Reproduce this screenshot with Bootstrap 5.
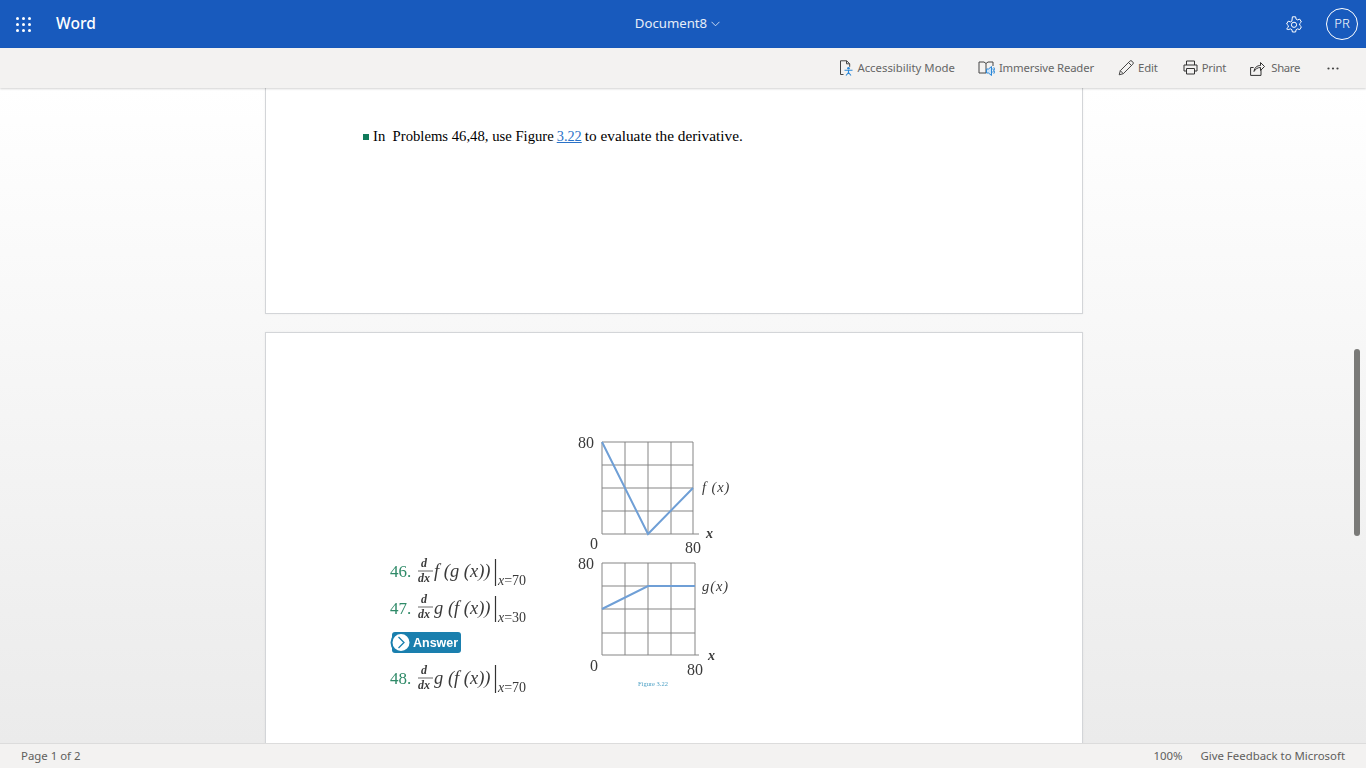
<!DOCTYPE html>
<html lang="en">
<head>
<meta charset="utf-8">
<title>Document8 - Word</title>
<link href="https://cdn.jsdelivr.net/npm/bootstrap@5.3.0/dist/css/bootstrap.min.css" rel="stylesheet">
<style>
html,body{height:100%;margin:0;overflow:hidden}
body{font-family:"Noto Sans","Open Sans","Liberation Sans",sans-serif;color:#605e5c}
.app-shell{height:768px;width:1366px}
.suite-bar{height:48px;background:#185abd;color:#fff;flex:none}
.suite-side{width:400px}
.waffle{margin-left:16px;margin-right:25px}
.app-name{font-size:15.5px;font-weight:500;letter-spacing:.1px}
.doc-title{font-size:13.2px;color:#e6edf8;margin-right:11px}
.gear-icon{margin-top:1px}
.avatar-ring{width:32px;height:32px;border:1px solid #fff;border-radius:50%;font-size:13px;font-weight:300;margin:0 8px 0 23px}
.cmd-bar{height:40px;background:#f3f2f1;flex:none;font-size:11.35px;padding-right:27px;box-shadow:0 1px 2px rgba(0,0,0,.18);position:relative;z-index:2}
.cmd-item{color:#666;display:flex;align-items:center}
.cmd-b span{letter-spacing:-.15px}
.cmd-c span{letter-spacing:-.15px}
.cmd-d span{letter-spacing:-.2px}
.cmd-e span{letter-spacing:-.35px}
.cmd-a{gap:4px;margin-right:23px}
.cmd-b{gap:4px;margin-right:24px}
.cmd-c{gap:4px;margin-right:25px}
.cmd-d{gap:4px;margin-right:24px}
.cmd-e{gap:6px;margin-right:27px}
.doc-area{background:linear-gradient(#fff,#ebebeb);overflow:hidden;min-height:0;position:relative}
.sheet{width:818px;background:#fff;border:1px solid #d3d5d8;margin-left:265px;box-shadow:0 0 2px rgba(0,0,0,.06)}
.sheet-one{height:226px;border-top:0;padding:39px 0 0 97px;margin-bottom:18px}
.sheet-two{height:1056px}
.lead-line{font-family:"Liberation Serif",serif;font-size:15.3px;line-height:18px;color:#000;white-space:nowrap;display:flex;align-items:center}
.lead-first{font-size:14.7px}
.green-sq{width:6px;height:6px;background:#0f7a5a;margin:1px 4px 0 0;display:inline-block}
.lead-line a{color:#2a72c8;margin:0 3px 0 3px;font-size:14.3px}
.figure-art{display:block;filter:blur(.35px)}
.figure-art text{font-family:"Liberation Serif",serif;fill:#3a3a3a}
.figure-art .prob-no{fill:#2f8a68}
.figure-art .fig-cap{fill:#4a9fc4}
.figure-art .ans-label{font-family:"Liberation Sans",sans-serif;fill:#fff}
.figure-art .fn-label{letter-spacing:.9px}
.scroll-thumb{position:absolute;left:1354px;top:261px;width:6px;height:187px;background:#7a7a78;border-radius:3px}
.status-bar{height:25px;background:#f3f2f1;border-top:1px solid #dcdcdc;flex:none;font-size:11.4px;padding:0 21px}
.status-zoom{margin-right:18px}
</style>
</head>
<body>
<div class="app-shell d-flex flex-column">
  <header class="suite-bar d-flex align-items-center">
    <div class="suite-side d-flex align-items-center">
      <svg class="waffle" width="15" height="15" viewBox="0 0 15 15" fill="#fff"><circle cx="1.5" cy="1.5" r="1.5"/><circle cx="7.5" cy="1.5" r="1.5"/><circle cx="13.5" cy="1.5" r="1.5"/><circle cx="1.5" cy="7.5" r="1.5"/><circle cx="7.5" cy="7.5" r="1.5"/><circle cx="13.5" cy="7.5" r="1.5"/><circle cx="1.5" cy="13.5" r="1.5"/><circle cx="7.5" cy="13.5" r="1.5"/><circle cx="13.5" cy="13.5" r="1.5"/></svg>
      <span class="app-name">Word</span>
    </div>
    <div class="flex-grow-1 d-flex justify-content-center align-items-center gap-1 doc-title">
      <span>Document8</span>
      <svg width="9" height="6" viewBox="0 0 9 6" fill="none" stroke="#dbe5f5" stroke-width=".9"><path d="M.5.8 4.5 4.8 8.5.8"/></svg>
    </div>
    <div class="suite-side d-flex align-items-center justify-content-end">
      <svg class="gear-icon" width="18" height="18" viewBox="0 0 18 18" fill="none" stroke="#fff" stroke-width="1"><path d="M7.4 1.2h3.2l.5 2.3 1.4.8 2.3-.7 1.6 2.8-1.7 1.6v1.6l1.7 1.6-1.6 2.8-2.3-.7-1.4.8-.5 2.3H7.4l-.5-2.3-1.4-.8-2.3.7L1.6 13.2l1.7-1.6V10L1.6 8.4 3.2 5.6l2.3.7 1.4-.8z" transform="translate(0 -.4)"/><circle cx="9" cy="8.8" r="2.6"/></svg>
      <div class="avatar-ring d-flex align-items-center justify-content-center">PR</div>
    </div>
  </header>

  <nav class="cmd-bar d-flex align-items-center justify-content-end">
    <div class="cmd-item cmd-a">
      <svg width="14" height="16" viewBox="0 0 14 16" fill="none"><path d="M1.5 14.5V.8h6.2l3 3v3M7.5.8v3h3M1.500 14.500h3" stroke="#444"/><circle cx="9.500" cy="8.300" r="1.300" fill="#2b88d8"/><path d="M5.500 10.200h8M9.500 10v2.500M9.500 12.500 7 15.500M9.500 12.500l2.500 3" stroke="#2b88d8" stroke-width="1.100"/></svg>
      <span>Accessibility Mode</span>
    </div>
    <div class="cmd-item cmd-b">
      <svg width="17" height="16" viewBox="0 0 17 16" fill="none"><path d="M8 13H1V2h5l2 1.500L10 2h5v4M8 3.500V13" stroke="#444"/><path d="M8.500 9h2l3-2.500v9l-3-2.500h-2z" fill="#cfe4f7" stroke="#2b88d8"/><path d="M14.700 8.500a3 3 0 0 1 0 4M15.800 7.300a5 5 0 0 1 0 6.400" stroke="#2b88d8"/></svg>
      <span>Immersive Reader</span>
    </div>
    <div class="cmd-item cmd-c">
      <svg width="16" height="16" viewBox="0 0 16 16" fill="none" stroke="#444"><path d="M1.200 14.800 2.300 10.700 11.800 1.200a1.500 1.500 0 0 1 2.200 0l.8.8a1.500 1.500 0 0 1 0 2.200L5.300 13.700z"/><path d="M2.300 10.700l3 3M10.500 2.500l3 3"/></svg>
      <span>Edit</span>
    </div>
    <div class="cmd-item cmd-d">
      <svg width="15" height="15" viewBox="0 0 15 15" fill="none" stroke="#333"><path d="M3.500 5V1h8v4M3.500 11H1V5h13v6h-2.500"/><path d="M3.500 8.500h8V14h-8z"/></svg>
      <span>Print</span>
    </div>
    <div class="cmd-item cmd-e">
      <svg width="15" height="16" viewBox="0 0 15 16" fill="none" stroke="#333"><path d="M.6 15.400V7.500h3M.6 15.400H11V10"/><path d="M4 11.500C4.500 7.500 7 5.500 10.500 5.500V2.500l4 4-4 4V7.500C7.500 7.500 5.500 9 4 11.500z"/></svg>
      <span>Share</span>
    </div>
    <svg width="12" height="3" viewBox="0 0 12 3" fill="#444"><circle cx="1.500" cy="1.500" r="1.100"/><circle cx="6" cy="1.500" r="1.100"/><circle cx="10.500" cy="1.500" r="1.100"/></svg>
  </nav>

  <main class="doc-area flex-grow-1">
    <section class="sheet sheet-one">
      <p class="lead-line m-0"><span class="green-sq"></span><span class="lead-first">In&nbsp; Problems 46,48, use Figure</span><a href="#">3.22</a>to evaluate the derivative.</p>
    </section>
    <section class="sheet sheet-two">
      <svg class="figure-art" width="816" height="411" viewBox="266 333 816 411">
        <g stroke="#858585" stroke-width="1" fill="none">
          <path d="M602 442H693M602 465H693M602 488H693M602 511H693M602 534H699M602 442V534M625 442V534M648 442V534M671 442V534M693 442V534"/>
          <path d="M602 563H695M602 586H695M602 609H695M602 633H695M602 655H699M602 563V655M625 563V655M648 563V655M671 563V655M695 563V655"/>
        </g>
        <path d="M602 442 648 534 693 488" fill="none" stroke="#6f9fd6" stroke-width="2"/>
        <path d="M602 609 648 586H695" fill="none" stroke="#6f9fd6" stroke-width="2"/>
        <g font-size="16">
          <text x="578" y="448">80</text><text x="590" y="549">0</text><text x="685" y="553">80</text>
          <text x="706" y="538" font-style="italic" font-weight="700" font-size="14">x</text>
          <text class="fn-label" x="702" y="492" font-style="italic" font-size="14.500">f (x)</text>
          <text x="578" y="569">80</text><text x="590" y="671">0</text><text x="687" y="675">80</text>
          <text x="708" y="660" font-style="italic" font-weight="700" font-size="14">x</text>
          <text class="fn-label" x="702" y="591" font-style="italic" font-size="14.500">g(x)</text>
        </g>
        <text class="fig-cap" x="638" y="686" font-size="6.500">Figure 3.22</text>

        <g font-size="17">
          <text class="prob-no" x="390" y="577">46.</text>
          <text class="prob-no" x="390" y="614">47.</text>
          <text class="prob-no" x="390" y="684">48.</text>
        </g>
        <g font-size="12" font-style="italic" font-weight="700">
          <text x="421" y="567">d</text><text x="418" y="582">dx</text>
          <text x="421" y="603">d</text><text x="418" y="618">dx</text>
          <text x="421" y="674">d</text><text x="418" y="689">dx</text>
        </g>
        <path d="M418 571H433M418 607H433M418 678H433" stroke="#444" stroke-width=".8"/>
        <path d="M495.500 559V586M495.500 596V622M495.500 665V693" stroke="#333" stroke-width="1.200"/>
        <g font-size="18.500" font-style="italic">
          <text x="434" y="577">f (g (x))</text>
          <text x="434" y="614">g (f (x))</text>
          <text x="434" y="684">g (f (x))</text>
        </g>
        <g font-size="14">
          <text x="498" y="585"><tspan font-style="italic">x</tspan>=70</text>
          <text x="498" y="622"><tspan font-style="italic">x</tspan>=30</text>
          <text x="498" y="692"><tspan font-style="italic">x</tspan>=70</text>
        </g>
        <rect x="392" y="632" width="69" height="21" rx="3" fill="#1a7fae"/>
        <circle cx="401" cy="642.500" r="9.500" fill="#fff" stroke="#1a7fae" stroke-width="2"/>
        <path d="M398.500 637 404 642.500 398.500 648" fill="none" stroke="#1a7fae" stroke-width="1.300"/>
        <text class="ans-label" x="413" y="647" font-size="12.500" font-weight="700">Answer</text>
      </svg>
    </section>
    <div class="scroll-thumb"></div>
  </main>

  <footer class="status-bar d-flex align-items-center">
    <span class="flex-grow-1">Page 1 of 2</span>
    <span class="status-zoom">100%</span>
    <span>Give Feedback to Microsoft</span>
  </footer>
</div>
<script src="https://cdn.jsdelivr.net/npm/bootstrap@5.3.0/dist/js/bootstrap.bundle.min.js"></script>
</body>
</html>
